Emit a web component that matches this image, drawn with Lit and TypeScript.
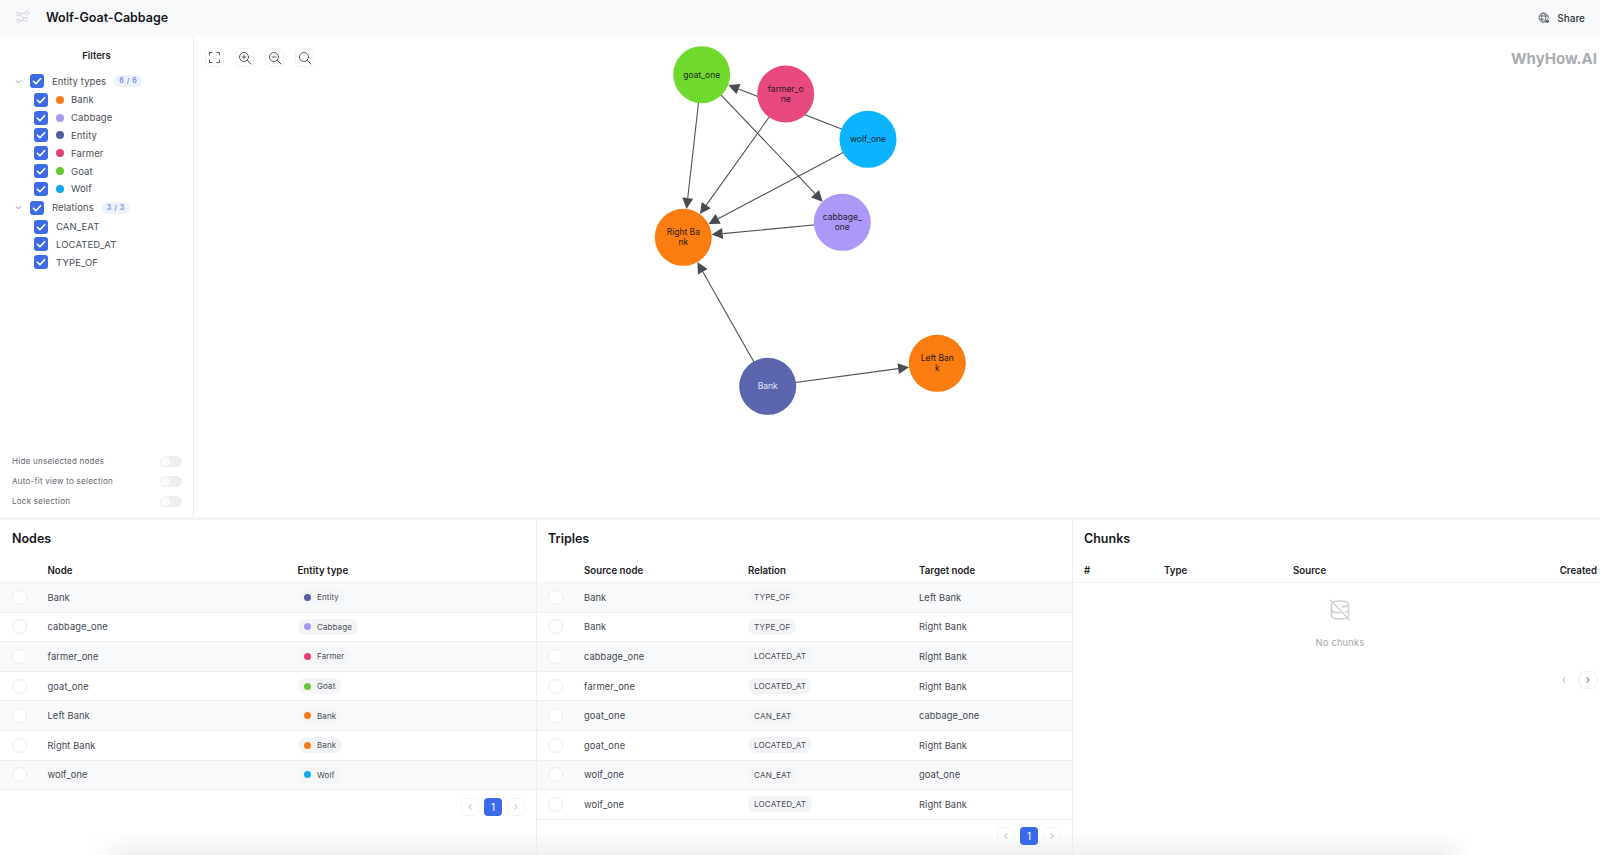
import { LitElement, html, css, svg } from "lit";
import { customElement } from "lit/decorators.js";

const COLORS: Record<string, string> = {
  Bank: "#f47b1c",
  Cabbage: "#a995ec",
  Entity: "#545e9f",
  Farmer: "#e0417a",
  Goat: "#66c635",
  Wolf: "#14a9ef",
};

interface GNode { id: string; x: number; y: number; color: string; lines: string[]; text: string; }
const R = 28.5;
const OX = 194;
const OY = 37;
const GRAPH: GNode[] = [
  { id: "goat", x: 701.7, y: 74.7, color: "#6fd92e", lines: ["goat_one"], text: "#1f2a1a" },
  { id: "farmer", x: 785.7, y: 94, color: "#e7487f", lines: ["farmer_o", "ne"], text: "#2b1a22" },
  { id: "wolf", x: 868, y: 139.3, color: "#0cb4ff", lines: ["wolf_one"], text: "#10222c" },
  { id: "cabbage", x: 842.3, y: 222.3, color: "#ad97f7", lines: ["cabbage_", "one"], text: "#231f33" },
  { id: "right", x: 683.3, y: 237.3, color: "#fb7d12", lines: ["Right Ba", "nk"], text: "#2a1c10" },
  { id: "bank", x: 767.7, y: 386.3, color: "#5a65ad", lines: ["Bank"], text: "#e4e7f6" },
  { id: "left", x: 937.3, y: 363.3, color: "#fb7d12", lines: ["Left Ban", "k"], text: "#2a1c10" },
];
const EDGES: [string, string][] = [
  ["wolf", "goat"], ["goat", "right"], ["goat", "cabbage"], ["farmer", "right"],
  ["wolf", "right"], ["cabbage", "right"], ["bank", "right"], ["bank", "left"],
];

const NODE_ROWS = [
  ["Bank", "Entity"], ["cabbage_one", "Cabbage"], ["farmer_one", "Farmer"], ["goat_one", "Goat"],
  ["Left Bank", "Bank"], ["Right Bank", "Bank"], ["wolf_one", "Wolf"],
];
const TRIPLES = [
  ["Bank", "TYPE_OF", "Left Bank"], ["Bank", "TYPE_OF", "Right Bank"],
  ["cabbage_one", "LOCATED_AT", "Right Bank"], ["farmer_one", "LOCATED_AT", "Right Bank"],
  ["goat_one", "CAN_EAT", "cabbage_one"], ["goat_one", "LOCATED_AT", "Right Bank"],
  ["wolf_one", "CAN_EAT", "goat_one"], ["wolf_one", "LOCATED_AT", "Right Bank"],
];

const check = html`<svg viewBox="0 0 14 14" width="14" height="14"><path d="M3.4 7.2l2.5 2.5 4.7-5" fill="none" stroke="#fff" stroke-width="1.6" stroke-linecap="round" stroke-linejoin="round"/></svg>`;
const chevDown = html`<svg viewBox="0 0 10 10" width="9" height="9"><path d="M2.5 4l2.5 2.5L7.5 4" fill="none" stroke="#8b9097" stroke-width="1" stroke-linecap="round" stroke-linejoin="round"/></svg>`;

@customElement("app-root")
export class AppRoot extends LitElement {
  static styles = css`
    :host { display: block; position: relative; width: 1600px; height: 855px; overflow: hidden; background: #fff; color: #3c4148; font-family: Inter, "Noto Sans", sans-serif; }
    .header { height: 37px; background: #f8f9fb; display: flex; align-items: center; padding: 0 15px 3px 16px; box-sizing: border-box; }
    .logo { width: 14px; margin-right: 16px; display: flex; }
    .title { font-size: 12.5px; font-weight: 600; color: #16181c; flex: 1; }
    .share { display: flex; align-items: center; gap: 7px; font-size: 10px; font-weight: 500; color: #33373d; padding-top: 2px; }
    .top { height: 480px; display: flex; border-bottom: 3px solid #f3f4f6; box-sizing: content-box; }
    .side { width: 194px; box-sizing: border-box; border-right: 1px solid #eceef1; display: flex; flex-direction: column; padding: 12px 0 0 0; }
    .side h3 { margin: 0 0 8px; font-size: 9.5px; line-height: 14px; font-weight: 600; text-align: center; color: #23262b; }
    .tree-row { display: flex; align-items: center; height: 17.8px; font-size: 9.5px; color: #4a4f56; letter-spacing: 0.1px; }
    .parent { padding-left: 14px; height: 20px; }
    .parent .chev { width: 16px; display: flex; }
    .child { padding-left: 34px; }
    .cb { width: 14px; height: 14px; border-radius: 3px; background: #3e6ce6; display: flex; flex: none; margin-right: 8px; }
    .dot { width: 8px; height: 8px; border-radius: 50%; flex: none; margin-right: 7px; }
    .count { margin-left: 8px; height: 12px; line-height: 12px; padding: 0 5px; border-radius: 6px; background: #edf1fd; color: #6d8ae6; font-size: 7px; font-weight: 600; letter-spacing: .6px; }
    .toggles { margin-top: auto; padding: 0 11px 6px 12px; display: flex; flex-direction: column; }
    .toggle { height: 20px; display: flex; align-items: center; justify-content: space-between; font-size: 8px; color: #5f646b; letter-spacing: .25px; }
    .sw { width: 22px; height: 11px; border-radius: 6px; background: #eceef0; position: relative; }
    .sw::after { content: ""; position: absolute; left: 1px; top: 1px; width: 9px; height: 9px; border-radius: 50%; background: #fbfbfc; }
    .canvas { flex: 1; position: relative; }
    .canvas svg.graph { position: absolute; left: 0; top: 0; }
    .tools { position: absolute; left: 11px; top: 11px; display: flex; gap: 11px; }
    .tool { width: 19px; height: 19px; border: 1px solid #f0f1f3; border-radius: 5px; display: flex; align-items: center; justify-content: center; box-sizing: border-box; background: #fff; }
    .brand { position: absolute; right: 3px; top: 13px; font-size: 15px; line-height: 18px; font-weight: 700; color: #a9acb1; }
    .bottom { display: flex; height: 335px; }
    .panel { box-sizing: border-box; border-right: 1px solid #eceef1; display: flex; flex-direction: column; }
    .p1 { width: 537px; }
    .p2 { width: 536px; }
    .p3 { width: 527px; border-right: 0; }
    .panel h2 { margin: 0; height: 38px; padding: 10px 0 0 12px; box-sizing: border-box; font-size: 12.5px; line-height: 18px; font-weight: 600; color: #16181c; }
    .p2 h2, .p3 h2 { padding-left: 11px; }
    .row { display: grid; height: 29.6px; align-items: center; font-size: 9.3px; color: #44484f; border-bottom: 1px solid #eceef1; box-sizing: border-box; letter-spacing: .1px; }
    .p1 .row { grid-template-columns: 47.5px 250px 1fr; }
    .p2 .row { grid-template-columns: 47px 164px 171px 1fr; }
    .row.head { height: 25px; font-size: 9.7px; font-weight: 600; color: #1d2025; border-bottom: 1px solid #f1f2f4; letter-spacing: 0; }
    .row.alt { background: #f8f9fb; }
    .radio { width: 13px; height: 13px; border: 1px solid #e9ebee; border-radius: 50%; background: #fff; margin-left: 12px; }
    .p2 .radio { margin-left: 11px; }
    .chip { display: inline-flex; align-items: center; gap: 6.5px; height: 16px; padding: 0 6px; border-radius: 8px; background: #f3f4f6; font-size: 8.2px; color: #4b4f56; justify-self: start; letter-spacing: .1px; }
    .chip.typed { font-size: 8px; }
    .alt .chip { background: #f5f6f8; }
    .chip .d { width: 7px; height: 7px; border-radius: 50%; }
    .pager { position: relative; z-index: 1; display: flex; align-items: center; justify-content: flex-end; gap: 5px; }
    .p1 .pager { padding: 8px 11px 0 0; }
    .p2 .pager { padding: 7px 11px 0 0; }
    .pg { width: 18px; height: 18px; border: 1px solid #f3f4f6; border-radius: 5px; box-sizing: border-box; display: flex; align-items: center; justify-content: center; }
    .pg.cur { width: 18px; border: 0; background: #3a6ae8; color: #fff; font-size: 10px; border-radius: 4px; }
    .p3 .row { display: flex; padding: 0 3px 0 11px; }
    .p3 .c1 { width: 80px; }
    .p3 .c2 { width: 129px; }
    .p3 .c3 { flex: 1; }
    .empty { display: flex; flex-direction: column; align-items: center; padding: 15px 0 0 7px; font-size: 9.3px; color: #a5a8ad; gap: 15px; letter-spacing: .2px; }
    .p3 .pager { padding: 23px 3px 0 0; gap: 6px; }
    .p3 .pg { border: 0; }
    .p3 .pg.on { border: 1px solid #eceef1; border-radius: 6px; }
    .fade { position: absolute; left: 87px; right: 126px; bottom: 0; height: 24px; background: linear-gradient(to bottom, rgba(240,241,243,0), rgba(236,237,239,.85)); -webkit-mask-image: linear-gradient(to right, transparent, #000 45px, #000 calc(100% - 35px), transparent); mask-image: linear-gradient(to right, transparent, #000 45px, #000 calc(100% - 35px), transparent); pointer-events: none; }
  `;

  private graph() {
    const map = new Map(GRAPH.map((n) => [n.id, n]));
    const W = 1406, H = 480;
    const edges = EDGES.map(([a, b]) => {
      const s = map.get(a)!, t = map.get(b)!;
      const dx = t.x - s.x, dy = t.y - s.y, d = Math.hypot(dx, dy);
      const ux = dx / d, uy = dy / d;
      const tipX = t.x - ux * R, tipY = t.y - uy * R;
      const bx = tipX - ux * 11, by = tipY - uy * 11;
      const px = -uy * 5.5, py = ux * 5.5;
      return svg`<line x1=${s.x - OX} y1=${s.y - OY} x2=${bx - OX} y2=${by - OY} stroke="#4d5258" stroke-width="1.1"/>
        <polygon points="${tipX - OX},${tipY - OY} ${bx + px - OX},${by + py - OY} ${bx - px - OX},${by - py - OY}" fill="#474c52"/>`;
    });
    const nodes = GRAPH.map((n) => {
      const x = n.x - OX, y = n.y - OY;
      const startY = y - (n.lines.length - 1) * 5 + 3;
      return svg`<circle cx=${x} cy=${y} r=${R} fill=${n.color}/>
        ${n.lines.map((l, i) => svg`<text x=${x} y=${startY + i * 10} text-anchor="middle" font-size="8.5" fill=${n.text} font-family="Inter, sans-serif">${l}</text>`)}`;
    });
    return html`<svg class="graph" width=${W} height=${H} viewBox="0 0 ${W} ${H}">${edges}${nodes}</svg>`;
  }

  private pager(active = false, showPage = true) {
    const col = active ? "#4a4f56" : "#a9adb3";
    return html`<div class="pager">
      <div class="pg"><svg width="8" height="8" viewBox="0 0 8 8"><path d="M5 1.5L2.8 4 5 6.5" fill="none" stroke="#a9adb3" stroke-width=".9" stroke-linecap="round"/></svg></div>
      ${showPage ? html`<div class="pg cur">1</div>` : ""}
      <div class="pg ${active ? "on" : ""}"><svg width="8" height="8" viewBox="0 0 8 8"><path d="M3 1.5L5.2 4 3 6.500" fill="none" stroke=${col} stroke-width=".9" stroke-linecap="round"/></svg></div>
    </div>`;
  }

  render() {
    const types = Object.keys(COLORS);
    return html`
      <div class="header">
        <div class="logo">
          <svg width="14" height="14" viewBox="0 0 14 14" fill="none" stroke="#cfd2d6" stroke-width="1">
            <circle cx="2.5" cy="4" r="1.7"/><circle cx="2.5" cy="11" r="1.7"/><circle cx="11" cy="2.5" r="1.9"/><circle cx="9.5" cy="9.5" r="1.9"/>
            <path d="M4.2 4l4.900-1.200M4 5l4 3.600M4.200 11l3.500-1.100"/>
          </svg>
        </div>
        <div class="title">Wolf-Goat-Cabbage</div>
        <div class="share">
          <svg width="12" height="12" viewBox="0 0 12 12" fill="none" stroke="#4a4f56" stroke-width=".8">
            <circle cx="5.6" cy="5.6" r="4.6"/><ellipse cx="5.6" cy="5.6" rx="2" ry="4.6"/><path d="M1.2 4h8.8M1.2 7.2h5"/><path d="M8 8.2l3 1-1.3.5-.5 1.3z" fill="#4a4f56"/>
          </svg>
          <span>Share</span>
        </div>
      </div>
      <div class="top">
        <div class="side">
          <h3>Filters</h3>
          <div class="tree-row parent"><span class="chev">${chevDown}</span><span class="cb">${check}</span>Entity types<span class="count">6 / 6</span></div>
          ${types.map((t) => html`<div class="tree-row child"><span class="cb">${check}</span><span class="dot" style="background:${COLORS[t]}"></span>${t}</div>`)}
          <div class="tree-row parent"><span class="chev">${chevDown}</span><span class="cb">${check}</span>Relations<span class="count">3 / 3</span></div>
          ${["CAN_EAT", "LOCATED_AT", "TYPE_OF"].map((t) => html`<div class="tree-row child"><span class="cb">${check}</span>${t}</div>`)}
          <div class="toggles">
            ${["Hide unselected nodes", "Auto-fit view to selection", "Lock selection"].map((t) => html`<div class="toggle"><span>${t}</span><span class="sw"></span></div>`)}
          </div>
        </div>
        <div class="canvas">
          ${this.graph()}
          <div class="tools">
            <div class="tool"><svg width="13" height="13" viewBox="0 0 13 13" fill="none" stroke="#565b62" stroke-width="1" stroke-linecap="round"><path d="M1.5 4V1.5H4M9 1.5h2.5V4M11.5 9v2.5H9M4 11.5H1.5V9"/></svg></div>
            <div class="tool"><svg width="14" height="14" viewBox="0 0 14 14" fill="none" stroke="#565b62" stroke-width="1" stroke-linecap="round"><circle cx="6" cy="6" r="4.5"/><path d="M9.4 9.4L13 13M4 6h4M6 4v4"/></svg></div>
            <div class="tool"><svg width="14" height="14" viewBox="0 0 14 14" fill="none" stroke="#565b62" stroke-width="1" stroke-linecap="round"><circle cx="6" cy="6" r="4.5"/><path d="M9.4 9.4L13 13M4 6h4"/></svg></div>
            <div class="tool"><svg width="14" height="14" viewBox="0 0 14 14" fill="none" stroke="#565b62" stroke-width="1" stroke-linecap="round"><circle cx="6" cy="6" r="4.5"/><path d="M9.4 9.4L13 13"/></svg></div>
          </div>
          <div class="brand">WhyHow.AI</div>
        </div>
      </div>
      <div class="bottom">
        <div class="panel p1">
          <h2>Nodes</h2>
          <div class="row head"><span></span><span>Node</span><span>Entity type</span></div>
          ${NODE_ROWS.map((r, i) => html`<div class="row ${i % 2 === 0 ? "alt" : ""}"><span class="radio"></span><span>${r[0]}</span><span class="chip typed"><span class="d" style="background:${COLORS[r[1]]}"></span>${r[1]}</span></div>`)}
          ${this.pager()}
        </div>
        <div class="panel p2">
          <h2>Triples</h2>
          <div class="row head"><span></span><span>Source node</span><span>Relation</span><span>Target node</span></div>
          ${TRIPLES.map((r, i) => html`<div class="row ${i % 2 === 0 ? "alt" : ""}"><span class="radio"></span><span>${r[0]}</span><span class="chip">${r[1]}</span><span>${r[2]}</span></div>`)}
          ${this.pager()}
        </div>
        <div class="panel p3">
          <h2>Chunks</h2>
          <div class="row head"><span class="c1">#</span><span class="c2">Type</span><span class="c3">Source</span><span>Created</span></div>
          <div class="empty">
            <svg width="24" height="24" viewBox="0 0 24 24" fill="none" stroke="#cdd0d4" stroke-width="1.5" stroke-linecap="round">
              <path d="M3.5 6C3.5 3.800 7.800 3 12 3s8.500 .8 8.500 3v12c0 2.200-4.300 3-8.500 3s-8.500-.8-8.500-3z"/><path d="M3.500 12.500c1 1.500 4.500 2.300 8.500 2.300M20.500 6.500c-1 1.500-3.500 2.300-6.500 2.500M20.500 12.500c-.5 .8-1.500 1.400-3 1.800"/><path d="M2.500 2l19 20"/>
            </svg>
            <span>No chunks</span>
          </div>
          ${this.pager(true, false)}
        </div>
      </div>
      <div class="fade"></div>
    `;
  }
}
